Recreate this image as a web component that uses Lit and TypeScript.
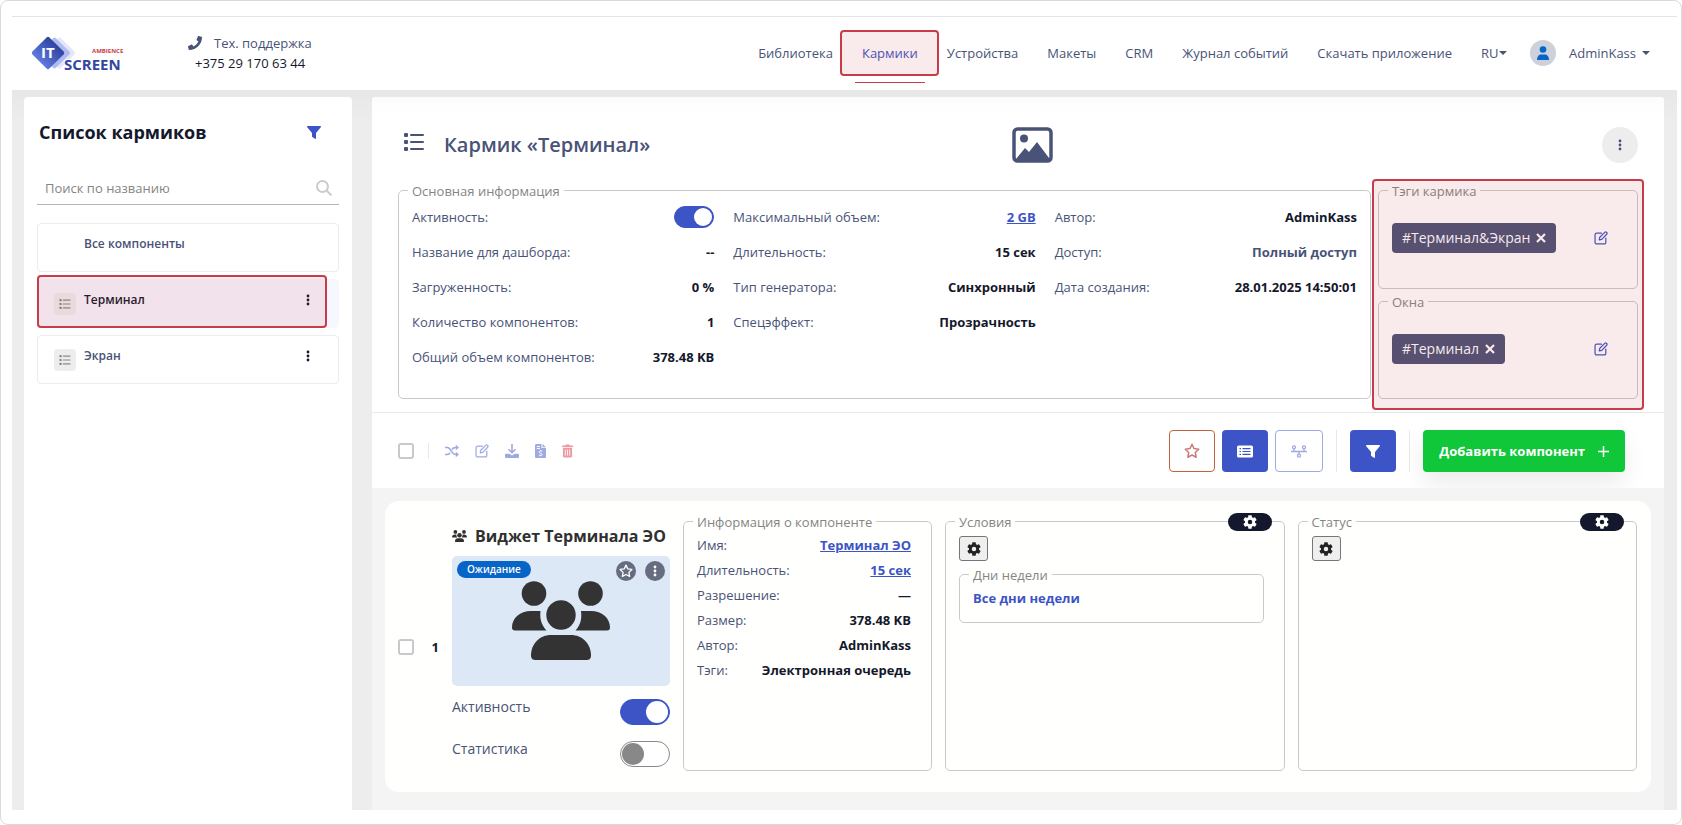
import { LitElement, html, css, svg, nothing } from "lit";
import { customElement } from "lit/decorators.js";

const icon = (cls: string, box: string, body: unknown) =>
  html`<svg class=${cls} viewBox=${box} aria-hidden="true">${body}</svg>`;

const listIcon = (cls: string) =>
  icon(cls, "0 0 20 18", svg`<g fill="currentColor">
    <rect x="0" y="0" width="4" height="4" rx="1"/><rect x="0" y="7" width="4" height="4" rx="1"/><rect x="0" y="14" width="4" height="4" rx="1"/>
    <rect x="6" y="1" width="14" height="2" rx="1"/><rect x="6" y="8" width="14" height="2" rx="1"/><rect x="6" y="15" width="14" height="2" rx="1"/></g>`);

const dotsIcon = (cls: string) =>
  icon(cls, "0 0 4 12", svg`<g fill="currentColor"><circle cx="2" cy="2" r="1.400"/><circle cx="2" cy="6" r="1.400"/><circle cx="2" cy="10" r="1.400"/></g>`);

const funnelIcon = (cls: string) =>
  icon(cls, "0 0 14 13", svg`<path fill="currentColor" d="M.8 0h12.400c.7 0 1 .8.6 1.300L9 7v5.200c0 .6-.6.9-1.100.6L5.400 11A.8.8 0 0 1 5 10.300V7L.2 1.300C-.2.8.1 0 .8 0z"/>`);

const editIcon = (cls: string) =>
  icon(cls, "0 0 16 16", svg`<g fill="none" stroke="currentColor" stroke-width="1.400" stroke-linejoin="round" stroke-linecap="round">
    <path d="M8.500 2.500H3A1.800 1.800 0 0 0 1.200 4.300V13A1.800 1.800 0 0 0 3 14.800h8.700a1.800 1.800 0 0 0 1.800-1.800V8"/>
    <path d="M6 10.200l.6-3L12.300 1.500a1.400 1.400 0 0 1 2 0l.2.200a1.400 1.400 0 0 1 0 2L8.900 9.500z"/></g>`);

const starIcon = (cls: string) =>
  icon(cls, "0 0 16 16", svg`<path fill="none" stroke="currentColor" stroke-width="1.500" stroke-linejoin="round" d="M8 1.300l2.050 4.300 4.700.65-3.450 3.300.85 4.700L8 12l-4.150 2.250.85-4.700L1.250 6.250l4.700-.65z"/>`);

const gearIcon = (cls: string) =>
  icon(cls, "2 2 20 20", svg`<path fill="currentColor" fill-rule="evenodd" d="M19.140 12.940c.04-.3.06-.61.06-.94 0-.32-.02-.64-.07-.94l2.030-1.580c.18-.14.23-.41.12-.61l-1.920-3.320c-.12-.22-.37-.29-.59-.22l-2.390.96c-.5-.38-1.030-.7-1.620-.94L14.400 2.810c-.04-.24-.24-.41-.48-.41h-3.840c-.24 0-.43.17-.47.41L9.250 5.350C8.660 5.590 8.120 5.920 7.630 6.290L5.240 5.330c-.22-.08-.47 0-.59.22L2.740 8.870c-.12.21-.08.47.12.61l2.030 1.580c-.05.3-.09.63-.09.94s.02.64.07.94l-2.030 1.580c-.18.14-.23.41-.12.61l1.920 3.320c.12.22.37.29.59.22l2.390-.96c.5.38 1.030.7 1.620.94l.36 2.540c.05.24.24.41.48.41h3.840c.24 0 .44-.17.47-.41l.36-2.540c.59-.24 1.130-.56 1.620-.94l2.390.96c.22.08.47 0 .59-.22l1.920-3.320c.12-.22.07-.47-.12-.61zM12 15.200a3.200 3.200 0 1 1 0-6.400 3.200 3.200 0 0 1 0 6.400z"/>`);

const peopleIcon = (cls: string) =>
  icon(cls, "0 0 98 79", svg`<g fill="currentColor">
    <circle cx="22" cy="12.500" r="12.300"/><circle cx="78.500" cy="12.500" r="12.300"/><circle cx="49" cy="34" r="14.700"/>
    <path d="M19 30h9.500c-1 8 1 14 6 19.500H3c-2 0-3-1-3-3C0 37 8 30 19 30z"/>
    <path d="M69 30h10c11 0 19 7 19 16.500 0 2-1 3-3 3H63.500C68.500 44 70 38 69 30z"/>
    <path d="M39 54h20c11 0 20 8.500 20 20.500 0 3-1.500 4.500-4.500 4.500h-51c-3 0-4.500-1.500-4.500-4.500C19 62.500 28 54 39 54z"/></g>`);

const caretIcon = () => icon("caret", "0 0 8 4", svg`<path fill="currentColor" d="M0 0h8L4 4z"/>`);

const crossIcon = () =>
  icon("cross", "0 0 10 10", svg`<path stroke="currentColor" stroke-width="2.200" d="M1 1l8 8M9 1L1 9"/>`);

type Row = { label: string; value: string; link?: boolean; soft?: boolean };

const mainInfo: Row[][] = [
  [
    { label: "Название для дашборда:", value: "--" },
    { label: "Загруженность:", value: "0 %" },
    { label: "Количество компонентов:", value: "1" },
    { label: "Общий объем компонентов:", value: "378.48 KB" },
  ],
  [
    { label: "Максимальный объем:", value: "2 GB", link: true },
    { label: "Длительность:", value: "15 сек" },
    { label: "Тип генератора:", value: "Синхронный" },
    { label: "Спецэффект:", value: "Прозрачность" },
  ],
  [
    { label: "Автор:", value: "AdminKass" },
    { label: "Доступ:", value: "Полный доступ", soft: true },
    { label: "Дата создания:", value: "28.01.2025 14:50:01" },
  ],
];

const componentInfo: Row[] = [
  { label: "Имя:", value: "Терминал ЭО", link: true },
  { label: "Длительность:", value: "15 сек", link: true },
  { label: "Разрешение:", value: "—" },
  { label: "Размер:", value: "378.48 KB" },
  { label: "Автор:", value: "AdminKass" },
  { label: "Тэги:", value: "Электронная очередь" },
];

const rowView = (r: Row) => html`<div class="row">
  <dt>${r.label}</dt>
  <dd class=${r.soft ? "soft" : ""}>${r.link ? html`<a href="#">${r.value}</a>` : r.value}</dd>
</div>`;

@customElement("app-root")
export class AppRoot extends LitElement {
  static styles = css`
    :host {
      display: block;
      font: 13px/20px "Open Sans", "Noto Sans", sans-serif;
      color: #495377;
      --blue: #3d54c6;
      --ink: #14182c;
      --red: #c83c4a;
      --line: #c9c9c9;
    }
    * { box-sizing: border-box; }
    h1, h2, h3, p, dl, dd, ul { margin: 0; padding: 0; }
    ul { list-style: none; }
    svg { display: block; flex: none; }
    a { color: inherit; text-decoration: none; }
    button { font: inherit; color: inherit; border: 0; background: none; padding: 0; margin: 0; cursor: pointer; }
    .frame {
      min-height: 100vh; display: flex; flex-direction: column;
      border: 1px solid #dadada; border-radius: 8px; padding: 15px 4px 14px 11px; background: #fff;
    }
    .marked { position: relative; }
    .marked::after {
      content: ""; position: absolute; inset: 0; border: 2px solid var(--red);
      border-radius: 4px; background: rgba(200, 60, 74, 0.11); pointer-events: none;
    }

    .header { display: flex; align-items: center; height: 74px; border-top: 1px solid #e4e4e4; padding: 0 27px 2px 19px; }
    .logo { width: 96px; height: 40px; margin-top: 6px; }
    .logo text { font-family: "Open Sans", sans-serif; font-weight: 700; }
    .phone-icon { width: 14px; height: 14px; }
    .support { margin-left: 61px; display: grid; grid-template-columns: 14px auto; column-gap: 12px; align-items: center; }
    .support .number { grid-column: 1 / 3; padding-left: 7px; color: var(--ink); }
    .nav { margin-left: auto; display: flex; gap: 29px; align-items: center; }
    .nav .current { color: var(--blue); }
    .nav .current::after { inset: -13px -21px -13px -22px; }
    .nav .current::before {
      content: ""; position: absolute; left: -7px; right: -7px; bottom: -20px; height: 1px; background: var(--red);
    }
    .lang { display: flex; align-items: center; }
    .lang select { appearance: none; border: 0; background: none; font: inherit; color: inherit; padding: 0; margin: 0; }
    .caret { width: 8px; height: 4px; }
    .user { margin-left: 23px; display: flex; align-items: center; gap: 13px; }
    .user .name { display: flex; align-items: center; gap: 6px; }
    .avatar { width: 26px; height: 26px; border-radius: 50%; background: #cdd1da; display: grid; place-items: center; }
    .avatar svg { width: 12px; height: 14px; }

    .body {
      flex: 1; display: grid; grid-template-columns: 328px minmax(0, 1fr); gap: 20px; padding: 7px 13px 0 12px;
      background: linear-gradient(#e7e7e7, #ededed 32px);
    }
    .side { background: #fff; border-radius: 4px 4px 0 0; padding: 23px 13px; }
    .side-head { display: flex; justify-content: space-between; align-items: center; padding: 0 18px 0 2px; }
    .side-head h2 { font-size: 18px; line-height: 24px; font-weight: 700; color: var(--ink); }
    .filter { color: var(--blue); }
    .funnel { width: 14px; height: 13px; }
    .search { display: flex; align-items: center; margin-top: 27px; height: 34px; padding: 0 7px 0 8px; border-bottom: 1px solid #b4b4b4; }
    .search input { flex: 1; min-width: 0; border: 0; outline: 0; padding: 0; background: none; font: inherit; color: var(--ink); }
    .search input::placeholder { color: #858585; opacity: 1; }
    .magnifier { width: 16px; height: 16px; }
    .items { margin-top: 18px; display: grid; gap: 7px; }
    .item {
      height: 49px; border: 1px solid #ececec; border-radius: 4px; display: grid;
      grid-template-columns: 22px 1fr 4px; column-gap: 8px; padding: 0 28px 0 16px; align-items: center;
      font-size: 12px; line-height: 18px; font-weight: 600;
    }
    .item a, .item .more { grid-row: 1; margin-bottom: 8px; }
    .item a { grid-column: 2; }
    .item .more { grid-column: 3; color: var(--ink); }
    .item.active { border-color: #f7f7ff; background: #f7f7ff; color: var(--ink); }
    .item.active::after { inset: -5px 11px -1px -1px; }
    .badge-icon { width: 22px; height: 22px; border-radius: 4px; background: #ededed; display: grid; place-items: center; color: #8a8a8a; }
    .list-s { width: 12px; height: 10px; }
    .dots { width: 4px; height: 12px; }

    .main { display: flex; flex-direction: column; background: #fff; border-radius: 4px 4px 0 0; overflow: hidden; }
    .top { padding: 0 26px 13px; border-bottom: 1px solid #e9e9e9; background: linear-gradient(#fcfcfc, #fff 20px); }
    .title { display: grid; grid-template-columns: 21fr 41px 20fr; align-items: center; height: 85px; padding-top: 11px; }
    .title h1 { font-size: 20px; line-height: 28px; font-weight: 600; display: flex; align-items: center; gap: 20px; padding-left: 6px; }
    .list-l { width: 20px; height: 18px; margin-bottom: 6px; }
    .picture { width: 41px; height: 36px; }
    .round { width: 36px; height: 36px; border-radius: 50%; background: #ededed; display: grid; place-items: center; justify-self: end; }

    fieldset { margin: 0; min-width: 0; border: 1px solid var(--line); border-radius: 5px; padding: 0 13px; }
    legend { margin-left: -4px; padding: 1px 4px 0; line-height: 16px; color: #858585; }
    .panels { display: grid; grid-template-columns: minmax(0, 1fr) 260px; gap: 7px; }
    .info { display: grid; grid-template-columns: repeat(3, minmax(0, 1fr)); gap: 19px; padding-bottom: 24px; }
    .row { display: flex; justify-content: space-between; white-space: nowrap; }
    .info .row { height: 35px; align-items: center; }
    dt { color: #495377; }
    dd { font-weight: 700; color: var(--ink); }
    dd.soft { color: #495377; }
    dd a { color: var(--blue); text-decoration: underline; }
    .tags { display: grid; gap: 4px; grid-template-rows: 1fr 1fr; }
    .tags.marked::after { inset: -3px -6px -11px -6px; }
    .tagline { display: flex; align-items: center; justify-content: space-between; padding: 24px 16px 0 0; }
    .tag {
      display: flex; align-items: center; gap: 6px; height: 30px; padding: 0 10px; border-radius: 4px;
      background: #495377; color: #fff; font-size: 14px;
    }
    .cross { width: 10px; height: 10px; }
    .edit { width: 14px; height: 14px; }
    .link { color: var(--blue); }

    .switch {
      appearance: none; margin: 0; width: 50px; height: 26px; border-radius: 13px; border: 1px solid #8a8a8a;
      background: #fff; padding: 1px; display: flex;
    }
    .switch::before { content: ""; width: 22px; height: 22px; border-radius: 50%; background: #888; }
    .switch:checked { background: var(--blue); border-color: var(--blue); justify-content: flex-end; }
    .switch:checked::before { background: #fff; }
    .switch.small { width: 40px; height: 22px; }
    .switch.small::before { width: 18px; height: 18px; }
    .check { appearance: none; margin: 0; width: 16px; height: 16px; border: 2px solid #c9c9c9; border-radius: 3px; background: #fff; }

    .tools { display: flex; align-items: center; justify-content: space-between; padding: 17px 39px 16px 26px; }
    .group { display: flex; align-items: center; gap: 14px; }
    .group .rule { width: 1px; height: 16px; background: #e9e9e9; }
    .actions { display: flex; align-items: center; gap: 16px; color: #9fa9e2; padding-left: 2px; }
    .tool { width: 14px; height: 14px; }
    .tool-n { width: 11px; height: 14px; }
    .danger { color: #ed9aa2; }
    .right { display: flex; gap: 7px; }
    .right .rule { width: 1px; background: #e9e9e9; margin: 0 6px; }
    .square { width: 46px; height: 42px; border-radius: 4px; display: grid; place-items: center; border: 1px solid transparent; }
    .square.star { border-color: #c4623c; color: #cb7a78; }
    .square.fill { background: var(--blue); color: #fff; }
    .square.line { border-color: #9fa9e2; color: #9fa9e2; width: 48px; }
    .square svg { width: 16px; height: 13px; }
    .square.star svg { height: 16px; }
    .add {
      height: 42px; padding: 0 16px; border-radius: 4px; background: #0fc738; color: #fff; font-weight: 700;
      display: flex; align-items: center; gap: 13px; box-shadow: 0 12px 24px rgba(0, 0, 0, 0.08);
    }
    .plus { width: 11px; height: 11px; }

    .stage { flex: 1; background: #f4f4f4; padding: 13px 13px 18px; }
    .card {
      background: #fffffd; border-radius: 14px; padding: 12px 14px 21px 13px; display: grid; column-gap: 13px;
      grid-template-columns: 16px 12px 218px 249px minmax(0, 1fr) minmax(0, 1fr);
    }
    .card > .check, .num { align-self: center; margin-top: 9px; }
    .num { font-weight: 700; color: var(--ink); text-align: right; }
    .widget { display: flex; flex-direction: column; padding-top: 12px; }
    .widget h3 { display: flex; align-items: center; gap: 8px; font-size: 16px; line-height: 22px; font-weight: 700; color: #303030; white-space: nowrap; }
    .people-s { width: 15px; height: 12px; }
    .people-l { width: 98px; height: 79px; }
    .thumb { position: relative; margin-top: 9px; height: 130px; border-radius: 5px; background: #dde8f7; color: #333; display: grid; justify-items: center; padding-top: 25px; }
    .status { position: absolute; left: 5px; top: 5px; height: 17px; padding: 0 10px; border-radius: 9px; background: #0765c7; color: #fff; font-size: 10px; line-height: 16px; font-weight: 600; }
    .thumb-buttons { position: absolute; right: 5px; top: 5px; display: flex; gap: 9px; }
    .thumb-buttons button { width: 20px; height: 20px; border-radius: 50%; background: #676c80; color: #fff; display: grid; place-items: center; }
    .star-s { width: 14px; height: 14px; }
    .setting { display: flex; justify-content: space-between; align-items: flex-start; font-size: 14px; height: 42px; padding-top: 13px; line-height: 16px; }
    .box { position: relative; min-height: 258px; }
    .box .row { height: 25px; align-items: center; }
    .component { padding-right: 20px; }
    .component dl { padding-top: 2px; }
    .pill { position: absolute; right: 12px; top: -17px; width: 44px; height: 18px; border-radius: 9px; background: #14182c; color: #fff; display: grid; place-items: center; }
    .gear { width: 14px; height: 14px; }
    .gear-button { width: 29px; height: 25px; margin-top: 6px; border: 1px solid #767676; border-radius: 3px; background: #efefef; color: #222; display: grid; place-items: center; }
    .days { margin: 5px 7px 0 0; padding: 0 13px 14px; }
    .days a { display: block; margin-top: 5px; font-weight: 700; color: var(--blue); }
  `;

  private item(name: string, active = false, plain = false) {
    return html`<li class=${active ? "item active marked" : "item"}>
      ${plain ? nothing : html`<span class="badge-icon">${listIcon("list-s")}</span>`}
      <a href="#">${name}</a>
      ${plain ? nothing : html`<button class="more" aria-label="Меню">${dotsIcon("dots")}</button>`}
    </li>`;
  }

  private tagBox(title: string, tag: string) {
    return html`<fieldset>
      <legend>${title}</legend>
      <div class="tagline">
        <button class="tag">${tag}${crossIcon()}</button>
        <button class="link" aria-label="Изменить">${editIcon("edit")}</button>
      </div>
    </fieldset>`;
  }

  render() {
    return html`<div class="frame">
      <header class="header">
        <svg class="logo" viewBox="0 0 96 40" role="img" aria-label="IT Screen Ambience">
          <defs>
            <linearGradient id="g" x1="0" y1="0" x2="0" y2="1"><stop offset="0" stop-color="#2f449f"/><stop offset="1" stop-color="#6079e0"/></linearGradient>
          </defs>
          <rect x="17" y="5.500" width="23" height="23" rx="2" transform="rotate(45 28.500 17)" fill="#e3e7fa"/>
          <rect x="12" y="5.500" width="23" height="23" rx="2" transform="rotate(45 23.500 17)" fill="#b0bcf0"/>
          <rect x="5" y="5" width="24" height="24" rx="2" transform="rotate(45 17 17)" fill="url(#g)"/>
          <text x="10" y="22" font-size="15" fill="#fff">IT</text>
          <text x="61" y="17" font-size="6" fill="#c83c4a">AMBIENCE</text>
          <text x="33" y="34" font-size="15" fill="#32479f" stroke="#fff" stroke-width="2" paint-order="stroke">SCREEN</text>
        </svg>
        <div class="support">
          ${icon("phone-icon", "0 0 512 512", svg`<path fill="currentColor" d="M493.400 24.600l-104-24c-11.300-2.600-22.900 3.300-27.500 13.900l-48 112c-4.200 9.800-1.400 21.300 6.900 28l60.600 49.600c-36 76.700-98.900 140.500-177.200 177.200l-49.600-60.600c-6.800-8.300-18.200-11.100-28-6.900l-112 48C3.900 366.500-2 378.100.6 389.400l24 104C27.100 504.200 36.700 512 48 512c256.100 0 464-207.500 464-464 0-11.200-7.700-20.900-18.600-23.400z"/>`)}
          <span>Тех. поддержка</span>
          <a class="number" href="tel:+375291706344">+375 29 170 63 44</a>
        </div>
        <nav class="nav">
          <a href="#">Библиотека</a>
          <a href="#" class="current marked">Кармики</a>
          <a href="#">Устройства</a>
          <a href="#">Макеты</a>
          <a href="#">CRM</a>
          <a href="#">Журнал событий</a>
          <a href="#">Скачать приложение</a>
          <label class="lang"><select aria-label="Язык"><option>RU</option></select>${caretIcon()}</label>
        </nav>
        <div class="user">
          <span class="avatar">${icon("", "0 0 12 14", svg`<g fill="#0765c7"><circle cx="6" cy="3.500" r="3.300"/><path d="M0 14c0-3.500 2-5.500 4-5.500h4c2 0 4 2 4 5.500z"/></g>`)}</span>
          <button class="name">AdminKass ${caretIcon()}</button>
        </div>
      </header>

      <div class="body">
        <aside class="side">
          <div class="side-head">
            <h2>Список кармиков</h2>
            <button class="filter" aria-label="Фильтр">${funnelIcon("funnel")}</button>
          </div>
          <label class="search">
            <input type="text" placeholder="Поиск по названию" aria-label="Поиск по названию" />
            ${icon("magnifier", "0 0 16 16", svg`<g fill="none" stroke="#cbcbcb" stroke-width="2"><circle cx="6.500" cy="6.500" r="5.500"/><path d="M10.500 10.500l5 5"/></g>`)}
          </label>
          <ul class="items">
            ${this.item("Все компоненты", false, true)} ${this.item("Терминал", true)} ${this.item("Экран")}
          </ul>
        </aside>

        <main class="main">
          <section class="top">
            <div class="title">
              <h1>${listIcon("list-l")}Кармик «Терминал»</h1>
              ${icon("picture", "0 0 41 36", svg`<rect x="2" y="2" width="37" height="32" rx="3.500" fill="none" stroke="currentColor" stroke-width="3.500"/><circle cx="12" cy="11.500" r="4" fill="currentColor"/><path fill="currentColor" d="M4 32l9-11 4 4 8-10 12 16v2H4z"/>`)}
              <button class="round" aria-label="Меню">${dotsIcon("dots")}</button>
            </div>
            <div class="panels">
              <fieldset>
                <legend>Основная информация</legend>
                <div class="info">
                  ${mainInfo.map((col, i) => html`<dl>
                    ${i === 0
                      ? html`<div class="row"><dt><label for="active">Активность:</label></dt><dd><input id="active" class="switch small" type="checkbox" checked /></dd></div>`
                      : nothing}
                    ${col.map(rowView)}
                  </dl>`)}
                </div>
              </fieldset>
              <div class="tags marked">${this.tagBox("Тэги кармика", "#Терминал&Экран")} ${this.tagBox("Окна", "#Терминал")}</div>
            </div>
          </section>

          <section class="tools">
            <div class="group">
              <input class="check" type="checkbox" aria-label="Выбрать все" />
              <span class="rule"></span>
              <div class="actions">
                <button aria-label="Перемешать">${icon("tool", "0 0 14 14", svg`<g fill="none" stroke="currentColor" stroke-width="1.500"><path d="M0 3.500h2.500c3.500 0 4 7 8 7H12M0 10.500h2.500c1.300 0 2-.8 2.600-1.800M7 5.500c.7-1.200 1.700-2 3.500-2H12"/></g><path fill="currentColor" d="M10.800.8L14 3.500 10.800 6.200zM10.800 7.800L14 10.500l-3.200 2.700z"/>`)}</button>
                <button aria-label="Изменить">${editIcon("tool")}</button>
                <button aria-label="Скачать">${icon("tool", "0 0 14 14", svg`<path fill="none" stroke="currentColor" stroke-width="1.600" d="M7 0v8.500M3.500 5.200L7 8.700l3.500-3.500"/><path fill="currentColor" d="M1 9.800h3.300L7 11.500l2.700-1.700H13a1 1 0 0 1 1 1V13a1 1 0 0 1-1 1H1a1 1 0 0 1-1-1v-2.200a1 1 0 0 1 1-1z"/>`)}</button>
                <button aria-label="Стоимость">${icon("tool-n", "0 0 11 14", svg`<path fill="currentColor" d="M1.300 0H6.500v4H11v8.700c0 .7-.6 1.300-1.300 1.300H1.300C.6 14 0 13.400 0 12.700V1.300C0 .6.6 0 1.300 0zM7.500 0L11 3.200H7.500z"/><path fill="none" stroke="#fff" d="M1.800 2.500h3M1.800 4.500h3M7.300 7.300C6 6.500 4 7 4.200 8.300c.2 1.200 2.900.8 2.900 2.100 0 1.200-2 1.300-3.200.6M5.600 6v1M5.600 11.300v1"/>`)}</button>
                <button class="danger" aria-label="Удалить">${icon("tool-n", "0 0 12 14", svg`<path fill="currentColor" d="M4 0h4l.6 1H12v1.600H0V1h3.400zM1 3.500h10v9.200c0 .7-.6 1.300-1.300 1.300H2.300c-.7 0-1.300-.6-1.300-1.300z"/><path stroke="#fff" stroke-width=".9" d="M3.600 5.500v6.500M6 5.500v6.500M8.400 5.500v6.500"/>`)}</button>
              </div>
            </div>
            <div class="right">
              <button class="square star" aria-label="Избранное">${starIcon("")}</button>
              <button class="square fill" aria-label="Список">${icon("", "0 0 16 12", svg`<rect width="16" height="12" rx="1.500" fill="currentColor"/><path stroke="#3d54c6" stroke-width="1.200" d="M2.500 3.200H4M2.500 6H4M2.500 8.800H4M5.500 3.200h8M5.500 6h8M5.500 8.800h8"/>`)}</button>
              <button class="square line" aria-label="Схема">${icon("", "0 0 16 13", svg`<g fill="none" stroke="currentColor" stroke-width="1.300"><circle cx="3" cy="2.300" r="1.500"/><circle cx="13" cy="2.300" r="1.500"/><circle cx="8" cy="10.700" r="1.500"/><path d="M0 6.500h16M3 3.800V6.500M13 3.800V6.500M8 6.500v2.700"/></g>`)}</button>
              <span class="rule"></span>
              <button class="square fill" aria-label="Фильтр">${funnelIcon("")}</button>
              <span class="rule"></span>
              <button class="add">Добавить компонент ${icon("plus", "0 0 11 11", svg`<path stroke="currentColor" stroke-width="1.500" d="M5.500 0v11M0 5.500h11"/>`)}</button>
            </div>
          </section>

          <section class="stage">
            <article class="card">
              <input class="check" type="checkbox" aria-label="Выбрать компонент 1" />
              <span class="num">1</span>
              <div class="widget">
                <h3>${peopleIcon("people-s")}Виджет Терминала ЭО</h3>
                <div class="thumb">
                  ${peopleIcon("people-l")}
                  <span class="status">Ожидание</span>
                  <div class="thumb-buttons">
                    <button aria-label="Избранное">${starIcon("star-s")}</button>
                    <button aria-label="Меню">${dotsIcon("dots")}</button>
                  </div>
                </div>
                <div class="setting"><label for="on">Активность</label><input id="on" class="switch" type="checkbox" checked /></div>
                <div class="setting"><label for="stat">Статистика</label><input id="stat" class="switch" type="checkbox" /></div>
              </div>
              <fieldset class="box component">
                <legend>Информация о компоненте</legend>
                <dl>${componentInfo.map(rowView)}</dl>
              </fieldset>
              <fieldset class="box">
                <legend>Условия</legend>
                <button class="pill" aria-label="Настройки условий">${gearIcon("gear")}</button>
                <button class="gear-button" aria-label="Настроить условия">${gearIcon("gear")}</button>
                <fieldset class="days">
                  <legend>Дни недели</legend>
                  <a href="#">Все дни недели</a>
                </fieldset>
              </fieldset>
              <fieldset class="box">
                <legend>Статус</legend>
                <button class="pill" aria-label="Настройки статуса">${gearIcon("gear")}</button>
                <button class="gear-button" aria-label="Настроить статус">${gearIcon("gear")}</button>
              </fieldset>
            </article>
          </section>
        </main>
      </div>
    </div>`;
  }
}
